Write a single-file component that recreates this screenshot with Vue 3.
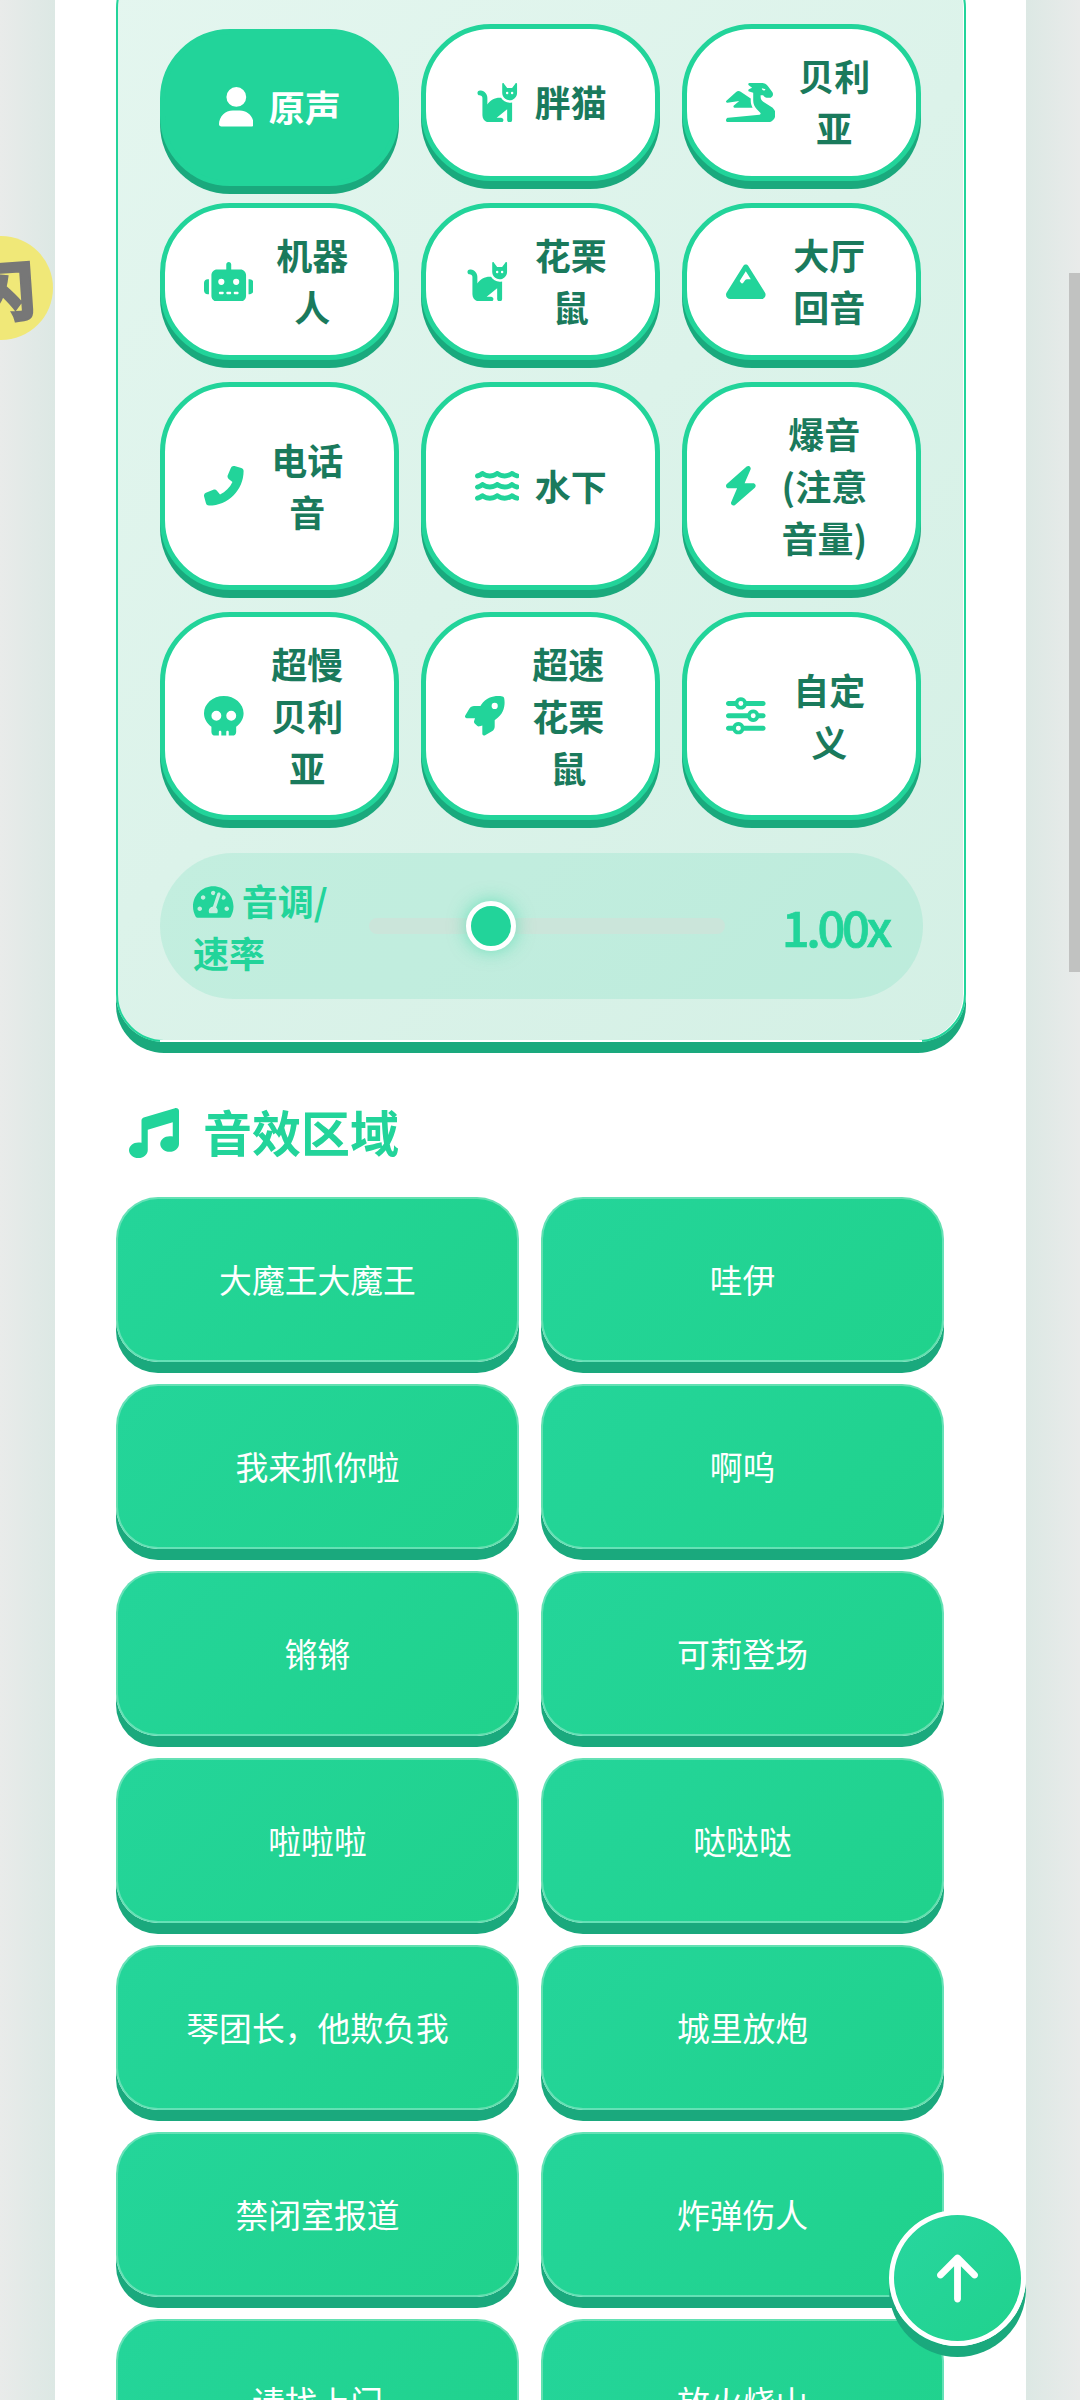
<script setup>
const P = {
  user: ['0 0 448 512', 'M224 256A128 128 0 1 0 224 0a128 128 0 1 0 0 256zm-45.7 48C79.8 304 0 383.8 0 482.3C0 498.7 13.3 512 29.7 512H418.3c16.4 0 29.7-13.3 29.7-29.7C448 383.8 368.2 304 269.7 304H178.3z'],
  cat: ['0 0 576 512', 'M320 192h17.1c22.1 38.3 63.5 64 110.9 64c11 0 21.8-1.4 32-4v4 32V480c0 17.7-14.3 32-32 32s-32-14.3-32-32V339.2L280 448h56c17.7 0 32 14.3 32 32s-14.3 32-32 32H192c-53 0-96-43-96-96V192.5c0-16.1-12-29.8-28-31.8l-7.9-1c-17.5-2.2-30-18.2-27.8-35.7s18.2-30 35.7-27.8l7.9 1c48 6 84.1 46.8 84.1 95.3v85.3c34.4-51.7 93.2-85.8 160-85.8zm160 26.5v0c-10 3.5-20.8 5.5-32 5.5c-28.4 0-54-12.4-71.6-32h0c-3.7-4.1-7-8.5-9.9-13.2C357.3 164 352 146.6 352 128v0V32 12 10.7C352 4.8 356.7 .1 362.6 0h.2c3.3 0 6.4 1.6 8.4 4.2l0 .1L384 21.3l27.2 36.3L416 64h64l4.8-6.4L512 21.3 524.8 4.3l0-.1c2-2.6 5.1-4.2 8.4-4.2h.2C539.3 .1 544 4.8 544 10.7V12 32v96c0 17.3-4.6 33.6-12.6 47.6c-11.3 19.8-29.6 35.2-51.4 42.9zM432 128a16 16 0 1 0 -32 0 16 16 0 1 0 32 0zm48 16a16 16 0 1 0 0-32 16 16 0 1 0 0 32z'],
  dragon: ['0 0 640 512', 'M352 124.5l-51.9-13c-6.5-1.6-11.3-7.1-12-13.8s2.8-13.1 8.7-16.1l40.8-20.4L294.4 28.8c-5.5-4.1-7.8-11.3-5.6-17.9S297.1 0 304 0H416h32 16c30.2 0 58.7 14.2 76.8 38.4l57.6 76.8c6.2 8.3 9.6 18.4 9.6 28.8c0 26.5-21.5 48-48 48H538.5c-17 0-33.3-6.7-45.3-18.7L480 160H448v21.5c0 24.8 12.8 47.9 33.8 61.1l106.6 66.6c32.1 20.1 51.6 55.2 51.6 93.1C640 462.9 590.9 512 530.2 512H496 432 32.3c-3.3 0-6.6-.4-9.6-1.4C13.5 507.8 6 501 2.4 492.1C1 488.7 .2 485.2 0 481.4c-.2-3.7 .3-7.3 1.3-10.7c2.8-9.2 9.6-16.7 18.6-20.4c3-1.2 6.2-2 9.5-2.2L433.3 412c8.3-.7 14.7-7.7 14.7-16.1c0-4.3-1.7-8.4-4.7-11.4l-44.4-44.4c-30-30-46.9-70.7-46.9-113.1V181.5v-57zM512 72.3c0-.1 0-.2 0-.3s0-.2 0-.3v.6zm-1.3 7.4L464.3 68.1c-.2 1.3-.3 2.6-.3 3.9c0 13.3 10.7 24 24 24c10.6 0 19.5-6.8 22.7-16.3zM130.9 116.5c16.3-14.5 40.4-16.2 58.5-4.1l130.6 87V227c0 32.8 8.4 64.8 24 93H112c-6.7 0-12.7-4.2-15-10.4s-.5-13.3 4.6-17.7L171 232.3 18.4 255.8c-7 1.1-13.9-2.6-16.9-9s-1.5-14.1 3.8-18.8L130.9 116.5z'],
  robot: ['0 0 640 512', 'M320 0c17.7 0 32 14.3 32 32V96H472c39.8 0 72 32.2 72 72V440c0 39.8-32.2 72-72 72H168c-39.8 0-72-32.2-72-72V168c0-39.8 32.2-72 72-72H288V32c0-17.7 14.3-32 32-32zM208 384c-8.8 0-16 7.2-16 16s7.2 16 16 16h32c8.8 0 16-7.2 16-16s-7.2-16-16-16H208zm96 0c-8.8 0-16 7.2-16 16s7.2 16 16 16h32c8.8 0 16-7.2 16-16s-7.2-16-16-16H304zm96 0c-8.8 0-16 7.2-16 16s7.2 16 16 16h32c8.8 0 16-7.2 16-16s-7.2-16-16-16H400zM264 256a40 40 0 1 0 -80 0 40 40 0 1 0 80 0zm152 40a40 40 0 1 0 0-80 40 40 0 1 0 0 80zM48 224H64V416H48c-26.5 0-48-21.5-48-48V272c0-26.5 21.5-48 48-48zm544 0c26.5 0 48 21.5 48 48v96c0 26.5-21.5 48-48 48H576V224h16z'],
  mountain: ['0 0 512 512', 'M256 32c12.5 0 24.1 6.4 30.8 17L503.4 394.4c5.6 8.9 8.6 19.2 8.6 29.7c0 30.9-25 55.9-55.9 55.9H55.9C25 480 0 455 0 424.1c0-10.5 3-20.8 8.6-29.7L225.2 49c6.6-10.6 18.3-17 30.8-17zm65 192L256 120.4 176.9 246.5l18.3 24.4c6.4 8.5 19.2 8.5 25.6 0l25.6-34.1c6-8.1 15.5-12.8 25.6-12.8h49z'],
  phone: ['0 0 512 512', 'M347.1 24.6c7.7-18.6 28-28.5 47.4-23.2l88 24C499.9 30.2 512 46 512 64C512 311.4 311.4 512 64 512c-18 0-33.8-12.1-38.6-29.5l-24-88c-5.3-19.4 4.6-39.7 23.2-47.4l96-40c16.3-6.8 35.2-2.1 46.3 11.6L207.3 368c70.4-33.3 127.4-90.3 160.7-160.7L318.7 167c-13.7-11.2-18.4-30-11.6-46.3l40-96z'],
  water: ['0 0 576 512', 'M269.5 69.9c11.1-7.9 25.9-7.9 37 0C329 85.4 356.5 96 384 96c26.9 0 55.4-10.8 77.4-26.1l0 0c11.9-8.5 28.1-7.8 39.2 1.7c14.4 11.9 32.5 21 50.6 25.2c17.2 4 27.9 21.2 23.9 38.4s-21.2 27.9-38.4 23.9c-24.5-5.7-44.9-16.5-58.2-25C449.5 149.7 417 160 384 160c-31.9 0-60.6-9.9-80.4-18.9c-5.8-2.7-11.1-5.3-15.6-7.7c-4.5 2.4-9.7 5.1-15.6 7.7c-19.8 9-48.5 18.9-80.4 18.9c-33 0-65.5-10.3-94.5-25.8c-13.4 8.4-33.7 19.3-58.2 25c-17.2 4-34.4-6.7-38.4-23.9s6.7-34.4 23.9-38.4C42.8 92.6 61 83.5 75.3 71.6c11.1-9.5 27.3-10.1 39.2-1.7l0 0C136.7 85.2 165.1 96 192 96c27.5 0 55-10.6 77.5-26.1zm37 288C329 373.4 356.5 384 384 384c26.9 0 55.4-10.8 77.4-26.1l0 0c11.9-8.5 28.1-7.8 39.2 1.7c14.4 11.9 32.5 21 50.6 25.2c17.2 4 27.9 21.2 23.9 38.4s-21.2 27.9-38.4 23.9c-24.5-5.7-44.9-16.5-58.2-25C449.5 437.7 417 448 384 448c-31.9 0-60.6-9.9-80.4-18.9c-5.8-2.7-11.1-5.3-15.6-7.7c-4.5 2.4-9.7 5.1-15.6 7.7c-19.8 9-48.5 18.9-80.4 18.9c-33 0-65.5-10.3-94.5-25.8c-13.4 8.4-33.7 19.3-58.2 25c-17.2 4-34.4-6.7-38.4-23.9s6.7-34.4 23.9-38.4c18.1-4.2 36.2-13.3 50.6-25.2c11.1-9.4 27.3-10.1 39.2-1.7l0 0C136.7 373.2 165.1 384 192 384c27.5 0 55-10.6 77.5-26.1c11.1-7.9 25.9-7.9 37 0zm0-144C329 229.4 356.5 240 384 240c26.9 0 55.4-10.8 77.4-26.1l0 0c11.9-8.5 28.1-7.8 39.2 1.7c14.4 11.9 32.5 21 50.6 25.2c17.2 4 27.9 21.2 23.9 38.4s-21.2 27.9-38.4 23.9c-24.5-5.7-44.9-16.5-58.2-25C449.5 293.7 417 304 384 304c-31.9 0-60.6-9.9-80.4-18.9c-5.8-2.7-11.1-5.3-15.6-7.7c-4.5 2.4-9.7 5.1-15.6 7.7c-19.8 9-48.5 18.9-80.4 18.9c-33 0-65.5-10.3-94.5-25.8c-13.4 8.4-33.7 19.3-58.2 25c-17.2 4-34.4-6.7-38.4-23.9s6.7-34.4 23.9-38.4c18.1-4.2 36.2-13.3 50.6-25.2c11.1-9.5 27.3-10.1 39.2-1.7l0 0C136.7 229.2 165.1 240 192 240c27.5 0 55-10.6 77.5-26.1c11.1-7.9 25.9-7.9 37 0z'],
  bolt: ['32 0 384 512', 'M349.4 44.6c5.9-13.7 1.5-29.7-10.6-38.5s-28.6-8-39.9 1.8l-256 224c-10 8.8-13.6 22.9-8.9 35.3S50.7 288 64 288H175.5L98.6 467.4c-5.9 13.7-1.5 29.7 10.6 38.5s28.6 8 39.9-1.8l256-224c10-8.8 13.6-22.9 8.9-35.3s-18.1-20.7-31.4-20.7H272.5L349.4 44.6z'],
  skull: ['0 0 512 512', 'M416 398.9c58.5-41.1 96-104.1 96-174.9C512 100.3 397.4 0 256 0S0 100.3 0 224c0 70.7 37.5 133.8 96 174.9c0 .4 0 .7 0 1.1v64c0 26.5 21.5 48 48 48h48V464c0-8.8 7.2-16 16-16s16 7.2 16 16v48h64V464c0-8.8 7.2-16 16-16s16 7.2 16 16v48h48c26.5 0 48-21.5 48-48V400c0-.4 0-.7 0-1.1zM96 256a64 64 0 1 1 128 0A64 64 0 1 1 96 256zm256-64a64 64 0 1 1 0 128 64 64 0 1 1 0-128z'],
  rocket: ['0 0 512 512', 'M156.6 384.9L125.7 354c-8.5-8.5-11.5-20.8-7.7-32.2c3-8.9 7-20.5 11.8-33.8L24 288c-8.6 0-16.6-4.6-20.9-12.1s-4.2-16.7 .2-24.1l52.5-88.5c13-21.9 36.5-35.3 61.9-35.3l82.3 0c2.4-4 4.8-7.7 7.2-11.3C289.1-4.1 411.1-8.1 483.9 5.3c11.6 2.1 20.6 11.2 22.8 22.8c13.4 72.9 9.3 194.8-111.4 276.7c-3.5 2.4-7.3 4.8-11.3 7.2v82.3c0 25.4-13.4 49-35.3 61.9l-88.5 52.5c-7.4 4.4-16.6 4.5-24.1 .2s-12.1-12.2-12.1-20.9V380.8c-14.1 4.9-26.4 8.9-35.7 11.9c-11.2 3.6-23.4 .5-31.8-7.8zM384 168a40 40 0 1 0 0-80 40 40 0 1 0 0 80z'],
  sliders: ['0 0 512 512', 'M0 416c0 17.7 14.3 32 32 32l54.7 0c12.3 28.3 40.5 48 73.3 48s61-19.7 73.3-48L480 448c17.7 0 32-14.3 32-32s-14.3-32-32-32l-246.7 0c-12.3-28.3-40.5-48-73.3-48s-61 19.7-73.3 48L32 384c-17.7 0-32 14.3-32 32zm128 0a32 32 0 1 1 64 0 32 32 0 1 1 -64 0zM320 256a32 32 0 1 1 64 0 32 32 0 1 1 -64 0zm32-80c-32.8 0-61 19.7-73.3 48L32 224c-17.7 0-32 14.3-32 32s14.3 32 32 32l246.7 0c12.3 28.3 40.5 48 73.3 48s61-19.7 73.3-48l54.7 0c17.7 0 32-14.3 32-32s-14.3-32-32-32l-54.7 0c-12.3-28.3-40.5-48-73.3-48zM192 128a32 32 0 1 1 0-64 32 32 0 1 1 0 64zm73.3-64C253 35.7 224.8 16 192 16s-61 19.7-73.3 48L32 64C14.3 64 0 78.3 0 96s14.3 32 32 32l86.7 0c12.3 28.3 40.5 48 73.3 48s61-19.7 73.3-48L480 128c17.7 0 32-14.3 32-32s-14.3-32-32-32L265.3 64z'],
  gauge: ['0 0 576 512', 'M288 32C128.94 32 0 160.94 0 320c0 52.8 14.25 102.26 39.06 144.8 5.61 9.62 16.3 15.2 27.44 15.2h443c11.14 0 21.83-5.58 27.44-15.2C561.75 422.26 576 372.8 576 320c0-159.06-128.94-288-288-288zm0 64c14.71 0 26.58 10.13 30.32 23.65-1.11 2.26-2.64 4.23-3.45 6.67l-9.22 27.67c-5.13 3.49-10.97 6.01-17.64 6.01-17.67 0-32-14.33-32-32S270.33 96 288 96zM96 384c-17.67 0-32-14.33-32-32s14.33-32 32-32 32 14.33 32 32-14.33 32-32 32zm48-160c-17.67 0-32-14.33-32-32s14.33-32 32-32 32 14.33 32 32-14.33 32-32 32zm246.77-72.41l-61.33 184C343.13 347.33 352 364.54 352 384c0 11.72-3.38 22.55-8.88 32H232.88c-5.5-9.45-8.88-20.28-8.88-32 0-33.94 26.5-61.43 59.9-63.59l61.34-184.01c4.17-12.56 17.73-19.45 30.36-15.17 12.57 4.19 19.35 17.79 15.17 30.36zm14.66 57.2l15.52-46.55c3.47-1.29 7.13-2.23 11.05-2.23 17.67 0 32 14.33 32 32s-14.33 32-32 32c-11.38-.01-20.89-6.28-26.57-15.22zM480 384c-17.67 0-32-14.33-32-32s14.33-32 32-32 32 14.33 32 32-14.33 32-32 32z'],
  music: ['0 0 512 512', 'M499.1 6.3c8.1 6 12.9 15.6 12.9 25.7v72V368c0 44.2-43 80-96 80s-96-35.8-96-80s43-80 96-80c11.2 0 22 1.6 32 4.6V147L192 223.8V432c0 44.2-43 80-96 80s-96-35.8-96-80s43-80 96-80c11.2 0 22 1.6 32 4.6V200 128c0-14.1 9.3-26.6 22.8-30.7l320-96c9.7-2.9 20.2-1.1 28.3 5z'],
  up: ['0 0 384 512', 'M214.6 41.4c-12.5-12.5-32.8-12.5-45.3 0l-160 160c-12.5 12.5-12.5 32.8 0 45.3s32.8 12.5 45.3 0L160 141.2V448c0 17.7 14.3 32 32 32s32-14.3 32-32V141.2L329.4 246.6c12.5 12.5 32.8 12.5 45.3 0s12.5-32.8 0-45.3l-160-160z']
}

const voices = [
  { name: '原声', icon: 'user', active: true },
  { name: '胖猫', icon: 'cat' },
  { name: '贝利亚', icon: 'dragon' },
  { name: '机器人', icon: 'robot' },
  { name: '花栗鼠', icon: 'cat' },
  { name: '大厅回音', icon: 'mountain' },
  { name: '电话音', icon: 'phone' },
  { name: '水下', icon: 'water' },
  { name: '爆音(注意音量)', icon: 'bolt' },
  { name: '超慢贝利亚', icon: 'skull' },
  { name: '超速花栗鼠', icon: 'rocket' },
  { name: '自定义', icon: 'sliders' }
]

const sounds = [
  '大魔王大魔王', '哇伊', '我来抓你啦', '啊呜', '锵锵', '可莉登场', '啦啦啦', '哒哒哒',
  '琴团长，他欺负我', '城里放炮', '禁闭室报道', '炸弹伤人', '请找上门', '放火烧山'
]
</script>

<template>
  <div class="page">
    <main class="sheet">
      <section class="panel">
        <div class="voices">
          <button v-for="v in voices" :key="v.name" class="voice" :class="{ active: v.active }">
            <svg class="ico" :viewBox="P[v.icon][0]"><path fill="currentColor" :d="P[v.icon][1]" /></svg>
            <span class="voice-name">{{ v.name }}</span>
          </button>
        </div>
        <div class="pitch">
          <div class="pitch-label">
            <svg class="gauge" :viewBox="P.gauge[0]"><path fill="currentColor" :d="P.gauge[1]" /></svg>
            音调/速率
          </div>
          <div class="track"><span class="thumb"></span></div>
          <div class="pitch-value">1.00x</div>
        </div>
      </section>

      <h2 class="title">
        <svg class="music" :viewBox="P.music[0]"><path fill="currentColor" :d="P.music[1]" /></svg>
        音效区域
      </h2>

      <div class="sounds">
        <button v-for="s in sounds" :key="s" class="sound">{{ s }}</button>
      </div>
    </main>

    <div class="badge"><span class="badge-char">闪</span></div>
    <div class="scrollbar"></div>
    <button class="to-top" aria-label="top">
      <svg class="up" :viewBox="P.up[0]"><path fill="currentColor" :d="P.up[1]" /></svg>
    </button>
  </div>
</template>

<style scoped>
.page {
  position: relative;
  width: 1080px;
  height: 2400px;
  overflow: hidden;
  background: linear-gradient(90deg, #e9ebea 0, #dce8e4 55px, #dce8e4 1026px, #e9ebea 1080px);
  font-family: "Noto Sans CJK SC", "Noto Sans", sans-serif;
}
.sheet {
  width: 971px;
  height: 2400px;
  margin-left: 55px;
  padding-left: 61px;
  box-sizing: border-box;
  background: #fff;
}
.panel {
  position: relative;
  width: 850px;
  box-sizing: border-box;
  margin-top: 0;
  top: -40px;
  margin-bottom: -40px;
  padding: 62px 41.5px 41px;
  border: 2.5px solid #22d49a;
  border-radius: 48px;
  background: linear-gradient(135deg, #e4f6ef, #d4f0e5);
  box-shadow: 0 11px 0 #1aa97d, inset -1px 0 0 #fff;
}
.panel::after {
  content: "";
  position: absolute;
  left: 42px;
  right: 42px;
  bottom: -2.5px;
  height: 2.5px;
  background: linear-gradient(#fff 60%, #1aa97d 60%);
}
.voices {
  display: grid;
  grid-template-columns: repeat(3, 239px);
  column-gap: 22px;
  row-gap: 22px;
}
.voice {
  display: flex;
  align-items: center;
  justify-content: center;
  gap: 15.5px;
  box-sizing: border-box;
  min-height: 157px;
  padding: 19.5px 38px 19.5px 39.5px;
  border: 5px solid #22d49a;
  border-radius: 70px;
  background: #fff;
  color: #22d49a;
  box-shadow: 0 8px 0 #1aa97d;
  font: inherit;
}
.voice.active {
  position: relative;
  top: 4.5px;
  background: #22d49a;
  color: #fff;
}
.ico {
  flex: none;
  height: 39.6px;
  width: auto;
}
.voice-name {
  min-width: 0;
  margin-bottom: 3px;
  color: #1a7a5c;
  font-size: 36px;
  font-weight: 700;
  line-height: 52px;
  text-align: center;
}
.active .voice-name {
  color: #fff;
}
.pitch {
  display: flex;
  align-items: center;
  gap: 24px;
  margin-top: 33px;
  padding: 21px 32px 21px 33.5px;
  border-radius: 73px;
  background: rgba(34, 212, 154, 0.13);
}
.pitch-label {
  flex: none;
  width: 151.5px;
  color: #22d49a;
  font-size: 36px;
  font-weight: 700;
  line-height: 52px;
}
.gauge {
  width: 40.5px;
  height: 36px;
  vertical-align: -4px;
}
.track {
  position: relative;
  flex: 1;
  height: 16px;
  border-radius: 8px;
  background: #cbe5da;
}
.thumb {
  position: absolute;
  left: 97px;
  top: -17px;
  box-sizing: border-box;
  width: 50px;
  height: 50px;
  border: 5px solid #fff;
  border-radius: 50%;
  background: #22d49a;
  box-shadow: 0 0 18px rgba(34, 212, 154, 0.55);
}
.pitch-value {
  flex: none;
  width: 142px;
  padding-right: 1.5px;
  box-sizing: border-box;
  color: #22d49a;
  font-size: 49px;
  font-weight: 500;
  letter-spacing: -3.4px;
  line-height: 60px;
  text-align: right;
  -webkit-text-stroke: 0.7px #22d49a;
}
.title {
  display: flex;
  align-items: center;
  gap: 24px;
  margin: 52.5px 0 30.5px;
  padding-left: 13px;
  color: #22d49a;
  font-size: 49px;
  font-weight: 700;
  line-height: 72px;
}
.music {
  width: 50px;
  height: 50px;
  margin-top: 5px;
}
.sounds {
  display: grid;
  grid-template-columns: repeat(2, 403px);
  gap: 22px;
}
.sound {
  box-sizing: border-box;
  height: 165px;
  padding: 0 0 2px;
  border: 2.5px solid rgba(255, 255, 255, 0.3);
  border-radius: 42px;
  background: linear-gradient(135deg, #24d59a, #20d28c);
  box-shadow: 0 11px 0 #1aa97d;
  color: #fff;
  font: inherit;
  font-size: 32.8px;
}
.badge {
  position: absolute;
  left: -51px;
  top: 236px;
  display: flex;
  align-items: center;
  justify-content: center;
  width: 104px;
  height: 104px;
  border-radius: 50%;
  background: #f0e878;
}
.badge-char {
  margin-left: 4px;
  color: #777;
  font-size: 64px;
  font-weight: 900;
  line-height: 1;
  -webkit-text-stroke: 2px #777;
  transform: rotate(-4deg);
}
.scrollbar {
  position: absolute;
  left: 1069px;
  top: 273px;
  width: 11px;
  height: 699px;
  background: #c1c2c1;
}
.to-top {
  position: absolute;
  left: 889px;
  top: 2210px;
  display: flex;
  align-items: center;
  justify-content: center;
  box-sizing: border-box;
  width: 137px;
  height: 136px;
  padding: 0;
  border: 5px solid #fff;
  border-radius: 50%;
  background: linear-gradient(135deg, #28d69f, #20d28d);
  box-shadow: 0 11px 0 #1aa97d;
  color: #fff;
}
.up {
  width: 41px;
  height: 55px;
}
</style>
